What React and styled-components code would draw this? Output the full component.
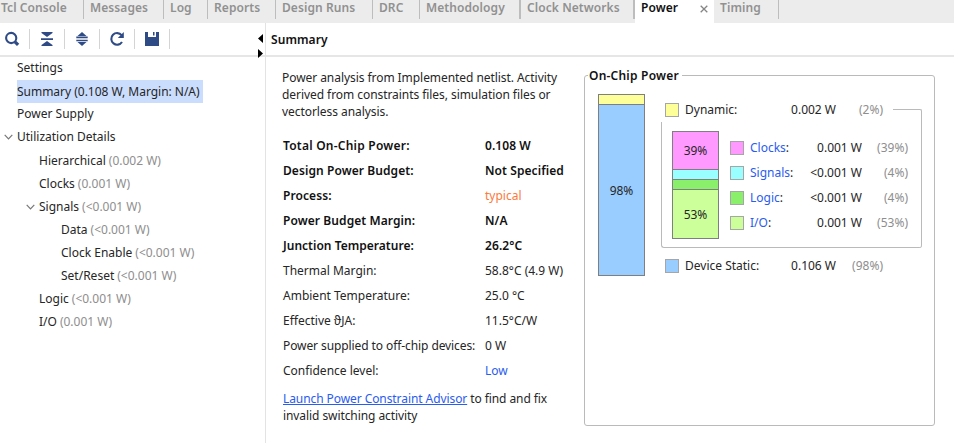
import React from "react";
import styled, { createGlobalStyle, css } from "styled-components";

const Global = createGlobalStyle`
  * { box-sizing: border-box; }
  body { margin: 0; background: #fff; overflow: hidden; }
`;

const bold = css`
  font-weight: 600;
  letter-spacing: 0.08px;
  color: #111;
`;

const Window = styled.div`
  width: 954px;
  height: 443px;
  display: flex;
  flex-direction: column;
  background: #fff;
  color: #262626;
  font: 12px/17px "Noto Sans", sans-serif;
  white-space: nowrap;
`;

const TabBar = styled.nav`
  display: flex;
  height: 23px;
  background: #ececec;
`;

const Tab = styled.div`
  ${bold}
  width: ${(p) => p.$w}px;
  height: 23px;
  padding-left: ${(p) => p.$pad ?? 6}px;
  line-height: 16px;
  color: ${(p) => (p.$active ? "#111" : "#919191")};
  background: ${(p) => (p.$active ? "#fff" : `linear-gradient(#bdbdbd, #bdbdbd) right top / ${p.$bar || 1}px 19px no-repeat`)};
  display: flex;
  justify-content: space-between;
`;

const CloseIcon = styled.svg`
  width: 8px;
  height: 8px;
  margin: 5px 6px 0 0;
`;

const Body = styled.div`
  display: flex;
  flex: 1;
  min-height: 0;
`;

const Sidebar = styled.aside`
  position: relative;
  width: 266px;
  border-right: 1px solid #e3e3e3;
`;

const Toolbar = styled.div`
  display: flex;
  height: 34px;
  padding-top: 6px;
  border-bottom: 2px solid #e6e6e6;
`;

const Tool = styled.div`
  width: ${(p) => p.$w || 35}px;
  height: 20px;
  border-right: 1px solid #d4d4d4;
  svg { display: block; width: 100%; height: 20px; }
`;

const SplitArrows = styled.svg`
  position: absolute;
  right: 1px;
  top: 11px;
  width: 6px;
  height: 25px;
`;

const TreeRow = styled.div`
  display: flex;
  align-items: center;
  height: 23px;
  padding-left: ${(p) => p.$level * 22 - 5}px;
  padding-bottom: ${(p) => (p.$raised ? 2 : 0)}px;
`;

const Label = styled.span`
  height: 23px;
  line-height: 23px;
  padding-right: 3px;
  ${(p) => p.$selected && css`background: #cbddfd; letter-spacing: -0.02px;`}
`;

const Muted = styled.span`
  color: #8e8e8e;
`;

const Chevron = styled.svg`
  width: 9px;
  height: 6px;
  margin: 1px 4px 0 -13px;
`;

const Main = styled.main`
  flex: 1;
`;

const Title = styled.h1`
  ${bold}
  margin: 0;
  height: 34px;
  padding-left: 5px;
  font-size: 12px;
  line-height: 34px;
  border-bottom: 2px solid #e6e6e6;
`;

const Content = styled.div`
  display: flex;
`;

const Report = styled.section`
  width: 318px;
  padding: 12px 0 0 16px;
`;

const Paragraph = styled.p`
  margin: 0 0 13px;
  letter-spacing: -0.06px;
`;

const Facts = styled.dl`
  display: grid;
  grid-template-columns: 202px 1fr;
  grid-auto-rows: 25px;
  line-height: 25px;
  margin: 0 0 7px 1px;
`;

const Term = styled.dt`
  letter-spacing: ${(p) => p.$tracking || 0}px;
  ${(p) => p.$bold && bold}
  ${(p) => p.$tracking && css`letter-spacing: ${p.$tracking}px;`}
`;

const Value = styled.dd`
  margin: 0;
  color: ${(p) => p.$color || "inherit"};
  ${(p) => p.$bold && bold}
`;

const Advice = styled.p`
  margin: 0 0 0 1px;
  letter-spacing: -0.08px;
`;

const Link = styled.a`
  color: #2a5cf0;
  ${(p) => p.$underline && css`text-decoration: underline;`}
`;

const Chip = styled.fieldset`
  width: 351px;
  height: 359px;
  margin: 10px 0 0;
  padding: 10px 0 0 13px;
  border: 1px solid #bababa;
  border-radius: 3px;
  display: flex;
`;

const Legend = styled.legend`
  ${bold}
  margin-left: -10px;
  padding: 0 3px 0 1px;
  line-height: 17px;
  letter-spacing: 0.22px;
`;

const Stack = styled.div`
  width: 47px;
  height: ${(p) => p.$h}px;
  border: 1px solid #7f7f7f;
  display: flex;
  flex-direction: column;
`;

const Segment = styled.div`
  height: ${(p) => p.$h}px;
  background: ${(p) => p.$color};
  display: flex;
  align-items: center;
  justify-content: center;
  & + & { border-top: 1px solid #7f7f7f; }
`;

const Breakdown = styled.div`
  margin-left: 16px;
  width: 261px;
  padding-top: 3px;
`;

const LegendRow = styled.div`
  display: grid;
  grid-template-columns: 20px 1fr 56px ${(p) => p.$last}px;
  align-items: center;
  height: 25px;
`;

const Swatch = styled.i`
  width: 14px;
  height: 14px;
  background: ${(p) => p.$color};
  border: 1px solid #a6a6a6;
`;

const Num = styled.span`
  text-align: right;
`;

const Percent = styled(Muted)`
  text-align: right;
`;

const Totals = styled.div`
  width: 218px;
  margin-left: 4px;
`;

const Group = styled.div`
  position: relative;
  display: flex;
  height: 126px;
  margin-bottom: 5px;
  padding: 9px 0 0 10px;
  border: solid #bababa;
  border-width: 0 0 1px 1px;
  border-radius: 0 0 3px 3px;
  &::after {
    content: "";
    position: absolute;
    right: 0;
    top: -13px;
    bottom: -1px;
    width: 28px;
    border: solid #bababa;
    border-width: 1px 1px 0 0;
    border-radius: 0 2px 3px 0;
  }
`;

const Rows = styled.div`
  width: 178px;
  margin: 4px 0 0 11px;
`;

const NAVY = "#2f4b86";

const tabs = [
  ["Tcl Console", 84, 1], ["Messages", 80], ["Log", 44], ["Reports", 68],
  ["Design Runs", 97], ["DRC", 47], ["Methodology", 101, 6, 2], ["Clock Networks", 114, 6, 2],
  ["Power", 79, 6], ["Timing", 65, 6],
];

const tree = [
  ["Settings", "", 1], ["Summary (0.108 W, Margin: N/A)", "", 1], ["Power Supply", "", 1],
  ["Utilization Details", "", 1, true], ["Hierarchical", "(0.002 W)", 2], ["Clocks", "(0.001 W)", 2],
  ["Signals", "(<0.001 W)", 2, true], ["Data", "(<0.001 W)", 3], ["Clock Enable", "(<0.001 W)", 3],
  ["Set/Reset", "(<0.001 W)", 3], ["Logic", "(<0.001 W)", 2], ["I/O", "(0.001 W)", 2],
];

const facts = [
  { term: "Total On-Chip Power:", value: "0.108 W", bold: true, boldValue: true, tracking: 0.23 },
  { term: "Design Power Budget:", value: "Not Specified", bold: true, boldValue: true },
  { term: "Process:", value: "typical", bold: true, color: "#fb7a3c" },
  { term: "Power Budget Margin:", value: "N/A", bold: true, boldValue: true },
  { term: "Junction Temperature:", value: "26.2°C", bold: true, boldValue: true, tracking: 0.02 },
  { term: "Thermal Margin:", value: "58.8°C (4.9 W)" },
  { term: "Ambient Temperature:", value: "25.0 °C" },
  { term: "Effective ϑJA:", value: "11.5°C/W" },
  { term: "Power supplied to off-chip devices:", value: "0 W", tracking: -0.09 },
  { term: "Confidence level:", value: "Low", color: "#2a5cf0" },
];

const parts = [
  ["Clocks", "0.001 W", "(39%)", "#ff99ff"], ["Signals", "<0.001 W", "(4%)", "#99ffff"],
  ["Logic", "<0.001 W", "(4%)", "#8aef6a"], ["I/O", "0.001 W", "(53%)", "#ccff99"],
];

export default function App() {
  return (
    <Window>
      <Global />
      <TabBar>
        {tabs.map(([name, w, pad, bar]) => (
          <Tab key={name} $w={w} $pad={pad} $bar={bar} $active={name === "Power"}>
            {name}
            {name === "Power" && (
              <CloseIcon viewBox="0 0 8 8"><path d="M.7.7l6.6 6.6M7.3.7L.7 7.3" stroke="#858585" strokeWidth="1.3" /></CloseIcon>
            )}
          </Tab>
        ))}
      </TabBar>
      <Body>
        <Sidebar>
          <Toolbar>
            <Tool $w={30}>
              <svg viewBox="0 0 29 20"><circle cx="11.2" cy="9" r="5.1" fill="none" stroke={NAVY} strokeWidth="2.1" /><path d="M15 12.8l3.1 3.1" stroke={NAVY} strokeWidth="3.2" /></svg>
            </Tool>
            <Tool>
              <svg viewBox="0 0 34 20" fill={NAVY}><path d="M11.5 3h11v1l-5.5 4-5.5-4zM11 9.2h12V11H11zM17 12l5.5 4v1h-11v-1z" /></svg>
            </Tool>
            <Tool>
              <svg viewBox="0 0 34 20" fill={NAVY}><path d="M17 3l4.5 4h-9zM11.3 7.6h11.4v1.6H11.3zM11.3 10.7h11.4v1.6H11.3zM12.5 13h9L17 17z" /></svg>
            </Tool>
            <Tool>
              <svg viewBox="0 0 34 20"><path d="M21.6 6.2A5.8 5.8 0 1 0 22 13" fill="none" stroke={NAVY} strokeWidth="2.1" /><path d="M23.8 3v6h-6z" fill={NAVY} /></svg>
            </Tool>
            <Tool>
              <svg viewBox="0 0 34 20"><path d="M10 3h3v5h8V3h3v14H10zM18 3h1.5v3.5H18z" fill={NAVY} /></svg>
            </Tool>
          </Toolbar>
          <SplitArrows viewBox="0 0 6 25"><path d="M5 0v9L0 4.5zM0 15v9l5-4.5z" /></SplitArrows>
          {tree.map(([name, note, level, open], i) => (
            <TreeRow key={name} $level={level} $raised={level === 1 && i !== 1}>
              {open && <Chevron viewBox="0 0 9 6"><path d="M.7.8l3.8 4 3.8-4" fill="none" stroke="#777" strokeWidth="1.2" /></Chevron>}
              <Label $selected={i === 1}>{name}</Label>
              <Muted>{note}</Muted>
            </TreeRow>
          ))}
        </Sidebar>
        <Main>
          <Title>Summary</Title>
          <Content>
            <Report>
              <Paragraph>
                Power analysis from Implemented netlist. Activity<br />
                derived from constraints files, simulation files or<br />
                vectorless analysis.
              </Paragraph>
              <Facts>
                {facts.map((f) => (
                  <React.Fragment key={f.term}>
                    <Term $bold={f.bold} $tracking={f.tracking}>{f.term}</Term>
                    <Value $bold={f.boldValue} $color={f.color}>{f.value}</Value>
                  </React.Fragment>
                ))}
              </Facts>
              <Advice>
                <Link $underline>Launch Power Constraint Advisor</Link> to find and fix<br />
                invalid switching activity
              </Advice>
            </Report>
            <Chip>
              <Legend>On-Chip Power</Legend>
              <Stack $h={182}>
                <Segment $h={9} $color="#ffff99" />
                <Segment $h={171} $color="#99ccff">98%</Segment>
              </Stack>
              <Breakdown>
                <Totals>
                  <LegendRow $last={47}>
                    <Swatch $color="#ffff99" /><span>Dynamic:</span><Num>0.002 W</Num><Percent>(2%)</Percent>
                  </LegendRow>
                </Totals>
                <Group>
                  <Stack $h={108}>
                    <Segment $h={37} $color="#ff99ff">39%</Segment>
                    <Segment $h={10} $color="#99ffff" />
                    <Segment $h={10} $color="#8aef6a" />
                    <Segment $h={49} $color="#ccff99">53%</Segment>
                  </Stack>
                  <Rows>
                    {parts.map(([name, watts, pct, color]) => (
                      <LegendRow key={name} $last={46}>
                        <Swatch $color={color} /><span><Link>{name}</Link>:</span><Num>{watts}</Num><Percent>{pct}</Percent>
                      </LegendRow>
                    ))}
                  </Rows>
                </Group>
                <Totals>
                  <LegendRow $last={47}>
                    <Swatch $color="#99ccff" /><span>Device Static:</span><Num>0.106 W</Num><Percent>(98%)</Percent>
                  </LegendRow>
                </Totals>
              </Breakdown>
            </Chip>
          </Content>
        </Main>
      </Body>
    </Window>
  );
}
